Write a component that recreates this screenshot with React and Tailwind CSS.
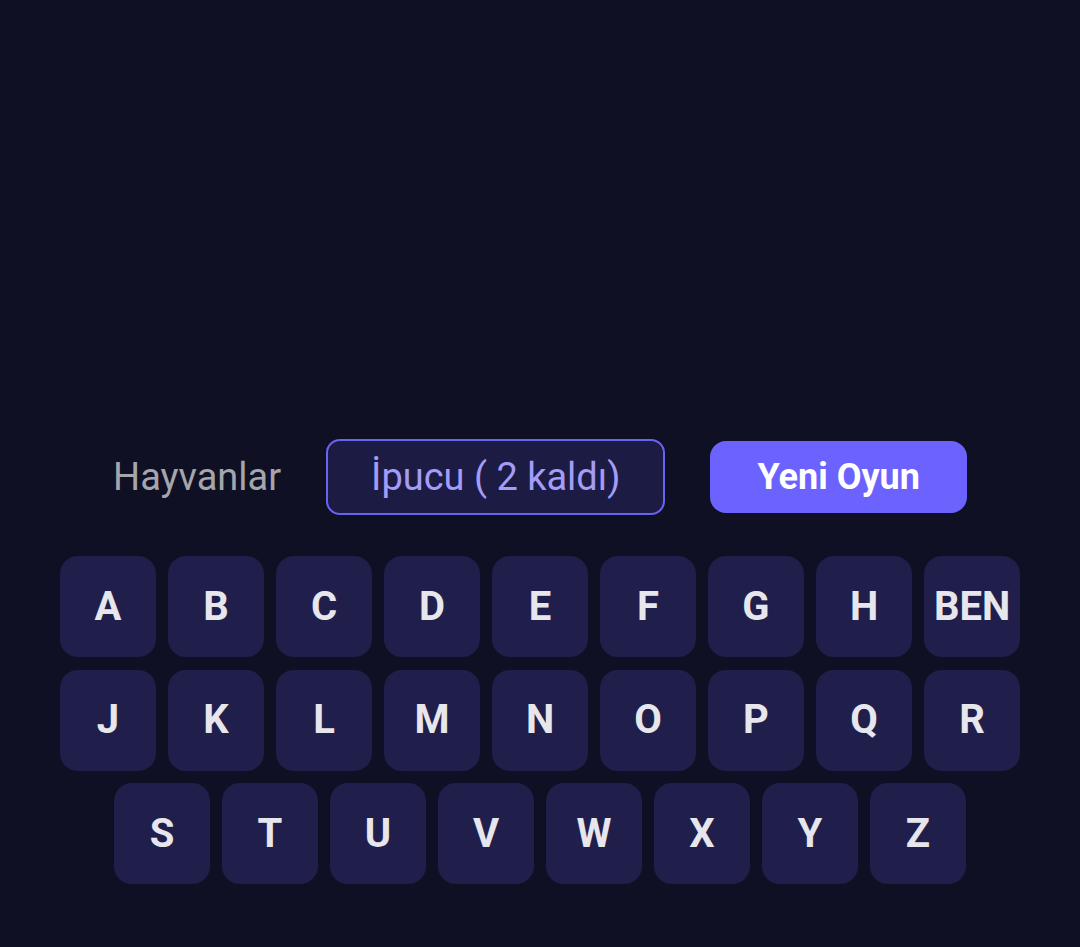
import React from 'react';

const ROWS = [
    ['A', 'B', 'C', 'D', 'E', 'F', 'G', 'H', 'BEN'],
    ['J', 'K', 'L', 'M', 'N', 'O', 'P', 'Q', 'R'],
    ['S', 'T', 'U', 'V', 'W', 'X', 'Y', 'Z'],
];

const Key = ({ label }) => (
    <button
        type="button"
        className="w-[96.5px] h-[101px] rounded-[18px] bg-[#201f4b] text-[#e6e6ec] text-[40px] font-bold flex items-center justify-center"
    >
        {label}
    </button>
);

export default function App() {
    return (
        <div
            className="h-screen w-full bg-[#0f1024] flex flex-col justify-end items-center pb-[63px]"
            style={{ fontFamily: 'Roboto, "Noto Sans", sans-serif' }}
        >
            {/* Controls */}
            <div className="flex items-center gap-[45px] mb-[41px]">
                <span className="text-[38px] text-[#a5a5ac] leading-none">Hayvanlar</span>
                <button
                    type="button"
                    className="h-[76px] px-[43px] rounded-[14px] border-2 border-[#6a62f0] bg-[#1c1b44] text-[#a49cf6] text-[38px] leading-none"
                >
                    İpucu ( 2 kaldı)
                </button>
                <button
                    type="button"
                    className="h-[72px] px-[47px] rounded-[16px] bg-[#6c63ff] text-white text-[36px] font-bold leading-none"
                >
                    Yeni Oyun
                </button>
            </div>

            {/* Keyboard */}
            <div className="flex flex-col gap-[12.5px]">
                {ROWS.map((row, i) => (
                    <div key={i} className="flex justify-center gap-[11.5px]">
                        {row.map((k) => (
                            <Key key={k} label={k} />
                        ))}
                    </div>
                ))}
            </div>
        </div>
    );
}
